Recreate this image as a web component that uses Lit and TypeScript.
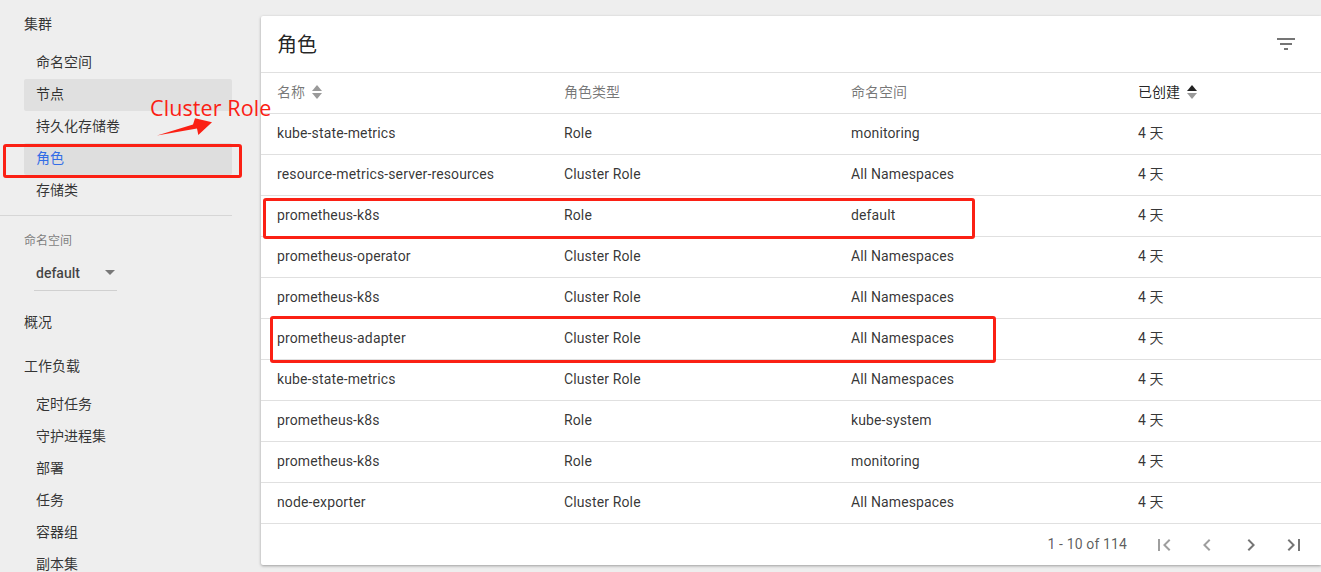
import { LitElement, html, css, svg } from 'lit';
import { customElement } from 'lit/decorators.js';

const rows = [
  ['kube-state-metrics', 'Role', 'monitoring'],
  ['resource-metrics-server-resources', 'Cluster Role', 'All Namespaces'],
  ['prometheus-k8s', 'Role', 'default'],
  ['prometheus-operator', 'Cluster Role', 'All Namespaces'],
  ['prometheus-k8s', 'Cluster Role', 'All Namespaces'],
  ['prometheus-adapter', 'Cluster Role', 'All Namespaces'],
  ['kube-state-metrics', 'Cluster Role', 'All Namespaces'],
  ['prometheus-k8s', 'Role', 'kube-system'],
  ['prometheus-k8s', 'Role', 'monitoring'],
  ['node-exporter', 'Cluster Role', 'All Namespaces'],
];

const pagerIcons = [
  { d: 'M18.41 16.59L13.82 12l4.59-4.59L17 6l-6 6 6 6zM6 6h2v12H6z', off: true },
  { d: 'M15.41 7.41L14 6l-6 6 6 6 1.41-1.41L10.83 12z', off: true },
  { d: 'M10 6L8.59 7.41 13.17 12l-4.58 4.59L10 18l6-6z', off: false },
  { d: 'M5.59 7.41L10.18 12l-4.59 4.59L7 18l6-6-6-6zM16 6h2v12h-2z', off: false },
];

const sortIcon = (active: boolean) => html`
  <svg class="sort" width="10" height="14" viewBox="0 0 10 14">
    <path d="M5 0l5 6H0z" fill=${active ? '#222' : '#9a9a9a'}></path>
    <path d="M0 8h10l-5 6z" fill="#9a9a9a"></path>
  </svg>
`;

@customElement('app-root')
export class AppRoot extends LitElement {
  static styles = css`
    :host {
      display: flex;
      position: relative;
      height: 572px;
      overflow: hidden;
      background: #eee;
      color: rgba(0, 0, 0, 0.8);
      font-family: Roboto, 'Noto Sans CJK SC', sans-serif;
      font-size: 14px;
      line-height: 20px;
    }
    .side {
      flex: none;
      width: 261px;
      box-sizing: border-box;
      padding: 8px 29px 0 0;
    }
    .group {
      height: 32px;
      line-height: 32px;
      padding-left: 24px;
    }
    .items {
      margin-top: 7px;
      padding-left: 24px;
    }
    .item {
      height: 32px;
      line-height: 31px;
      padding-left: 12px;
      border-radius: 2px;
    }
    .item.hover {
      background: #e0e0e0;
    }
    .item.active {
      background: #dedede;
      color: #326de6;
    }
    .divider {
      height: 1px;
      margin-top: 8px;
      background: #d6d6d6;
    }
    .ns-label {
      margin: 17px 0 0 24px;
      height: 16px;
      line-height: 16px;
      font-size: 12px;
      color: rgba(0, 0, 0, 0.5);
    }
    .ns-select {
      display: flex;
      align-items: center;
      justify-content: space-between;
      box-sizing: border-box;
      width: 83px;
      height: 34px;
      margin: 8px 0 0 34px;
      padding: 0 2px 2px;
      border-bottom: 1px solid #d0d0d0;
      font-weight: 500;
      color: rgba(0, 0, 0, 0.72);
    }
    .ns-caret {
      width: 0;
      height: 0;
      border-left: 5px solid transparent;
      border-right: 5px solid transparent;
      border-top: 5px solid #777;
    }
    .overview {
      margin-top: 15px;
    }
    .workloads {
      margin-top: 12px;
    }
    .main {
      flex: 1;
      min-width: 0;
      padding-top: 16px;
    }
    .card {
      height: 549px;
      background: #fff;
      border-radius: 2px 0 0 2px;
      box-shadow: 0 1px 3px rgba(0, 0, 0, 0.35);
    }
    .head {
      display: flex;
      align-items: center;
      justify-content: space-between;
      box-sizing: border-box;
      height: 57px;
      padding: 0 23px 0 16px;
      border-bottom: 1px solid #e0e0e0;
      font-size: 20px;
      color: rgba(0, 0, 0, 0.87);
    }
    .head span {
      margin-top: 2px;
    }
    .head svg {
      display: block;
      fill: rgba(0, 0, 0, 0.54);
    }
    .row {
      display: grid;
      grid-template-columns: 287px 287px 287px 1fr;
      align-items: center;
      box-sizing: border-box;
      height: 41px;
      padding: 0 0 2px 16px;
      border-bottom: 1px solid #e0e0e0;
      letter-spacing: 0.13px;
    }
    .row.labels {
      color: rgba(0, 0, 0, 0.54);
      letter-spacing: 0;
    }
    .label {
      display: flex;
      align-items: center;
      gap: 7px;
    }
    .label.on {
      color: rgba(0, 0, 0, 0.87);
    }
    .sort {
      display: block;
    }
    .pager {
      display: flex;
      align-items: center;
      justify-content: flex-end;
      height: 41px;
      padding-right: 5px;
    }
    .range {
      margin: 0 15px 2px 0;
      color: rgba(0, 0, 0, 0.65);
      letter-spacing: 0.13px;
    }
    .pager-btn {
      display: flex;
      align-items: center;
      justify-content: center;
      width: 43.5px;
      height: 40px;
      fill: rgba(0, 0, 0, 0.54);
    }
    .pager-btn.off {
      fill: rgba(0, 0, 0, 0.38);
    }
    .box {
      position: absolute;
      box-sizing: border-box;
      border: 3px solid #fb2014;
      border-radius: 3px;
    }
    .box-nav {
      left: 3px;
      top: 144px;
      width: 239px;
      height: 34px;
    }
    .box-k8s {
      left: 263px;
      top: 198px;
      width: 712px;
      height: 41px;
    }
    .box-adapter {
      left: 270px;
      top: 316px;
      width: 726px;
      height: 47px;
    }
    .note {
      position: absolute;
      left: 150px;
      top: 93px;
      font-family: 'Open Sans', sans-serif;
      font-size: 21.5px;
      line-height: 30px;
      letter-spacing: 0.1px;
      color: #fb2014;
      white-space: nowrap;
    }
    .arrow {
      position: absolute;
      left: 150px;
      top: 110px;
    }
  `;

  render() {
    const item = (text: string, cls = '') => html`<div class="item ${cls}">${text}</div>`;
    return html`
      <aside class="side">
        <div class="group">集群</div>
        <div class="items">
          ${item('命名空间')} ${item('节点', 'hover')} ${item('持久化存储卷')}
          ${item('角色', 'active')} ${item('存储类')}
        </div>
        <div class="divider"></div>
        <div class="ns-label">命名空间</div>
        <div class="ns-select"><span>default</span><span class="ns-caret"></span></div>
        <div class="group overview">概况</div>
        <div class="group workloads">工作负载</div>
        <div class="items">
          ${item('定时任务')} ${item('守护进程集')} ${item('部署')} ${item('任务')}
          ${item('容器组')} ${item('副本集')}
        </div>
      </aside>
      <main class="main">
        <section class="card">
          <div class="head">
            <span>角色</span>
            <svg width="24" height="24" viewBox="0 0 24 24">
              <path d="M10 18h4v-2h-4v2zM3 6v2h18V6H3zm3 7h12v-2H6v2z"></path>
            </svg>
          </div>
          <div class="row labels">
            <div class="label">名称 ${sortIcon(false)}</div>
            <div>角色类型</div>
            <div>命名空间</div>
            <div class="label on">已创建 ${sortIcon(true)}</div>
          </div>
          ${rows.map(
            (r) => html`
              <div class="row">
                <div>${r[0]}</div>
                <div>${r[1]}</div>
                <div>${r[2]}</div>
                <div>4 天</div>
              </div>
            `,
          )}
          <div class="pager">
            <span class="range">1 - 10 of 114</span>
            ${pagerIcons.map(
              (p) => html`
                <span class="pager-btn ${p.off ? 'off' : ''}">
                  <svg width="24" height="24" viewBox="0 0 24 24">${svg`<path d=${p.d}></path>`}</svg>
                </span>
              `,
            )}
          </div>
        </section>
      </main>
      <div class="box box-nav"></div>
      <div class="box box-k8s"></div>
      <div class="box box-adapter"></div>
      <div class="note">Cluster Role</div>
      <svg class="arrow" width="70" height="30" viewBox="0 0 70 30">
        <path d="M7 25.5L43 14.5 45 8.3 62 12.3 48.3 25 47 18.5z" fill="#fb2014"></path>
      </svg>
    `;
  }
}
